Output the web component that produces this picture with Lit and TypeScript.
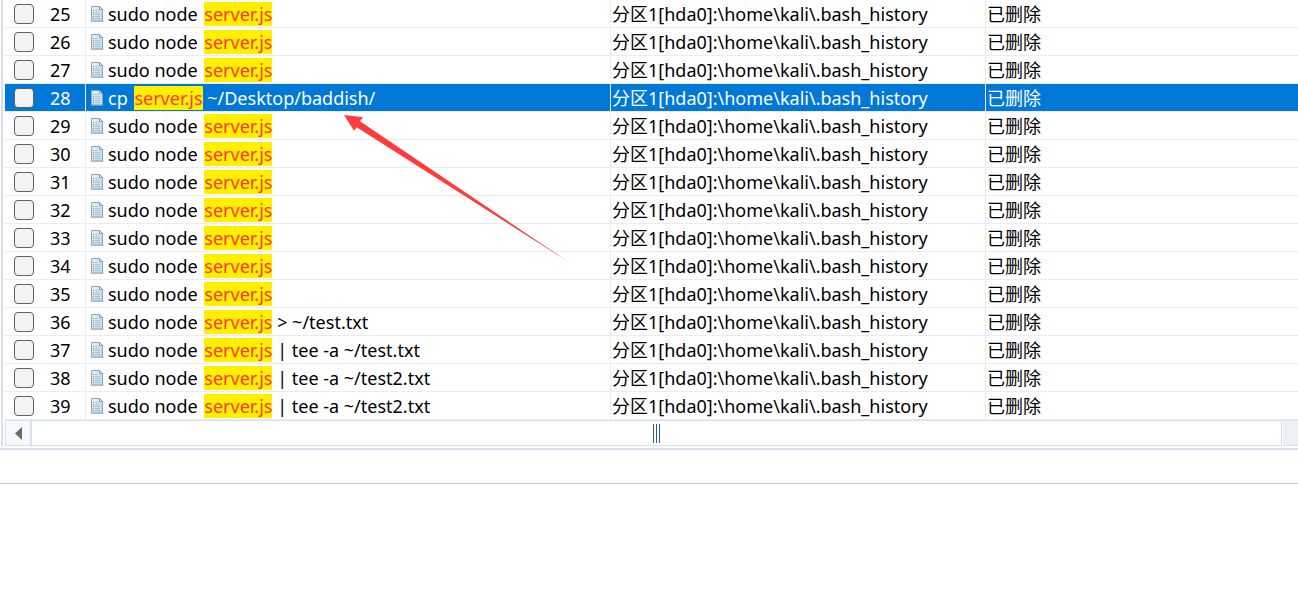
import { LitElement, html, css, svg } from "lit";
import { customElement, property, state } from "lit/decorators.js";

interface Entry {
  id: number;
  before: string;
  after: string;
}

const KEYWORD = "server.js";
const PATH = "分区1[hda0]:\\home\\kali\\.bash_history";
const STATUS = "已删除";

const commands: Record<number, [string, string]> = {
  28: ["cp ", " ~/Desktop/baddish/"],
  36: ["sudo node ", " > ~/test.txt"],
  37: ["sudo node ", " | tee -a ~/test.txt"],
  38: ["sudo node ", " | tee -a ~/test2.txt"],
  39: ["sudo node ", " | tee -a ~/test2.txt"],
};

const entries: Entry[] = Array.from({ length: 15 }, (_, i) => {
  const id = 25 + i;
  const [before, after] = commands[id] ?? ["sudo node ", ""];
  return { id, before, after };
});

const fileIcon = svg`
  <svg class="file" width="14" height="16" viewBox="0 0 14 16" aria-hidden="true">
    <defs>
      <linearGradient id="sheet" x1="0" y1="0" x2="1" y2="1">
        <stop offset="0" stop-color="#e6f2fa"/>
        <stop offset="1" stop-color="#b4d6ea"/>
      </linearGradient>
    </defs>
    <path d="M0 15.5H14" stroke="#8a9299" stroke-opacity="0.4"/>
    <path d="M1.5 .5H9.5L12.5 3.5V15H1.5Z" fill="url(#sheet)" stroke="#93a4b0"/>
    <path d="M9.5 .5V3.5H12.5Z" fill="#f8fcff" stroke="#7d8f9f" stroke-width=".8"/>
    <path d="M5 4.5H8M5 6.5H10M5 8.5H10M5 10.5H10M5 12.5H10" stroke="#aac6d8"/>
    <path d="M3 4.5H4M3 8.5H4" stroke="#5cab73"/>
    <path d="M3 6.5H4M3 12.5H4" stroke="#5a96cc"/>
    <path d="M3 10.5H4" stroke="#c87b62"/>
  </svg>`;

@customElement("result-table")
class ResultTable extends LitElement {
  @property({ attribute: false }) entries: Entry[] = [];
  @state() private selected = 28;

  static styles = css`
    :host {
      display: block;
    }
    .table {
      width: 100%;
      table-layout: fixed;
      border-collapse: separate;
      border-spacing: 0;
    }
    .col-id {
      width: 80px;
    }
    .col-command {
      width: 525px;
    }
    .col-path {
      width: 375px;
    }
    .cell {
      height: 26px;
      padding: 1px 0 0 1px;
      border-bottom: 1px solid #ececec;
      border-left: 1px solid #ececec;
      line-height: 26px;
      white-space: pre;
      overflow: hidden;
      text-align: left;
      vertical-align: top;
    }
    .id {
      padding-left: 9px;
      border-left: 0;
    }
    .command {
      padding-left: 4px;
    }
    .selected .cell {
      background: #0078d7;
      color: #fff;
      background-clip: padding-box;
    }
    .line {
      display: flex;
      align-items: center;
      height: 26px;
    }
    .pick {
      display: flex;
      align-items: center;
      gap: 16px;
      height: 26px;
    }
    .box {
      appearance: none;
      width: 20px;
      height: 20px;
      margin: 0;
      border: 1px solid #606060;
      border-radius: 4px;
      background: #f3f3f3;
    }
    .box:checked {
      background: #0078d7;
    }
    .file {
      flex: none;
      margin-right: 4px;
    }
    .hit {
      height: 24px;
      margin-left: 2px;
      line-height: 24px;
      background: #fff000;
      color: #ff3b30;
    }
  `;

  render() {
    return html`
      <table class="table">
        <colgroup>
          <col class="col-id" />
          <col class="col-command" />
          <col class="col-path" />
          <col />
        </colgroup>
        <tbody>
          ${this.entries.map(
            (e) => html`<tr
              class=${e.id === this.selected ? "selected" : ""}
              @click=${() => (this.selected = e.id)}
            >
              <td class="cell id"><label class="pick"><input class="box" type="checkbox" /><span>${e.id}</span></label></td>
              <td class="cell command"><div class="line">${fileIcon}<span>${e.before}</span><mark class="hit">${KEYWORD}</mark><span>${e.after}</span></div></td>
              <td class="cell">${PATH}</td>
              <td class="cell">${STATUS}</td>
            </tr>`
          )}
        </tbody>
      </table>
    `;
  }
}

@customElement("scroll-strip")
class ScrollStrip extends LitElement {
  static styles = css`
    :host {
      display: flex;
      height: 26px;
    }
    .arrow,
    .thumb,
    .end {
      box-sizing: border-box;
      margin: 0;
      border: 1px solid #d5dff0;
      border-radius: 0;
      display: flex;
      align-items: center;
      justify-content: center;
    }
    .arrow {
      width: 26px;
      padding: 0;
      background: #f7f9fc;
    }
    .thumb {
      flex: 1;
      gap: 2px;
      background: #fff;
    }
    .grip {
      width: 1px;
      height: 19px;
      background: #2a5a98;
    }
    .end {
      width: 16px;
      border-left-color: #fff;
      border-right: 0;
      background: #edf1f7;
    }
  `;

  render() {
    return html`
      <button class="arrow" aria-label="Scroll left">
        <svg width="7" height="13" viewBox="0 0 7 13"><path d="M7 0V13L0 6.5Z" fill="#6b6b6b" /></svg>
      </button>
      <div class="thumb"><span class="grip"></span><span class="grip"></span><span class="grip"></span></div>
      <div class="end"></div>
    `;
  }
}

@customElement("app-root")
class AppRoot extends LitElement {
  static styles = css`
    :host {
      display: block;
      position: relative;
      min-height: 100vh;
      background: #fff;
      color: #000;
      font-family: "Noto Sans", "Noto Sans CJK SC", sans-serif;
      font-size: 18px;
    }
    .panel {
      margin-left: 1px;
      padding-left: 2px;
      border-left: 2px solid #d5dff0;
    }
    .footer {
      height: 33px;
      margin-top: 2px;
      border-top: 2px solid #d5dff0;
      border-bottom: 1px solid #c9c9d9;
    }
    .pointer {
      position: absolute;
      left: 344px;
      top: 115px;
      pointer-events: none;
    }
  `;

  render() {
    return html`
      <main class="panel">
        <result-table .entries=${entries}></result-table>
        <scroll-strip></scroll-strip>
      </main>
      <div class="footer"></div>
      <svg class="pointer" width="224" height="147" viewBox="0 0 224 147" aria-hidden="true">
        <path d="M0 0L19 2.3L16 6.3L223 146L12.7 12.3L10 15.7Z" fill="#ff3b3b" />
      </svg>
    `;
  }
}
